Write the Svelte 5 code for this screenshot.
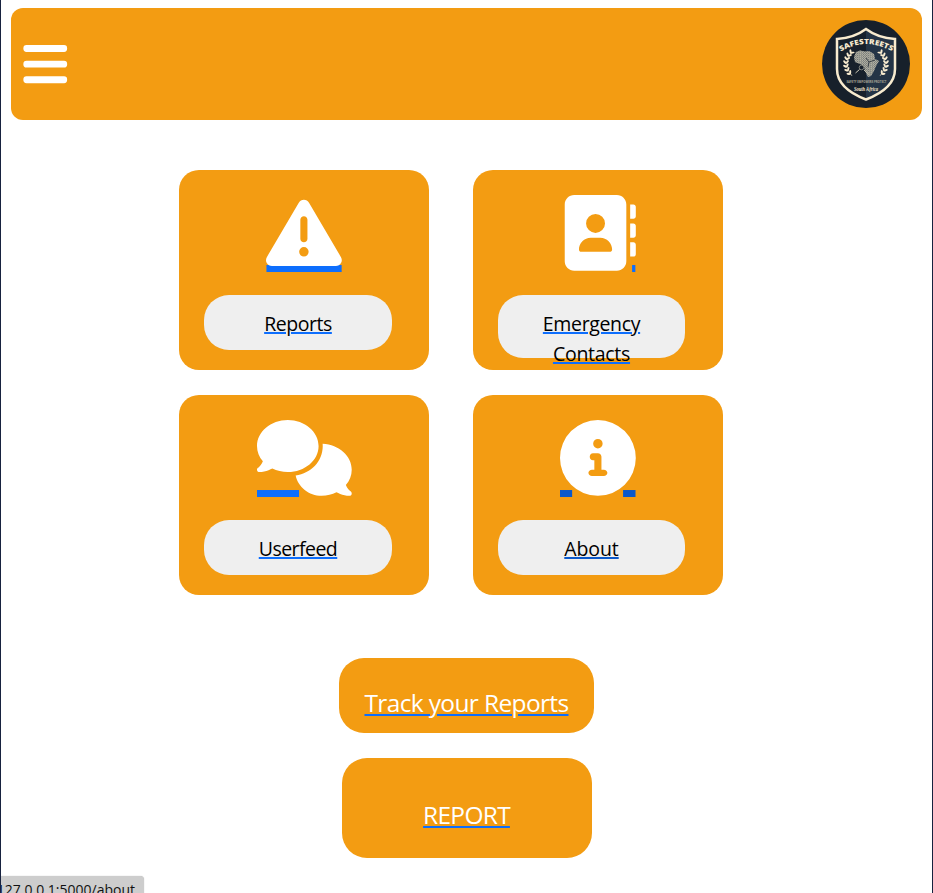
<script>
  const triangle =
    'M256 32c14.200 0 27.300 7.500 34.500 19.800l216 368c7.300 12.400 7.300 27.700.200 40.100S486.300 480 472 480H40c-14.300 0-27.600-7.700-34.700-20.100s-7-27.800.200-40.100l216-368C228.700 39.500 241.800 32 256 32zm0 112c-13.300 0-24 10.700-24 24V296c0 13.300 10.700 24 24 24s24-10.700 24-24V168c0-13.300-10.700-24-24-24zm32 240a32 32 0 1 0-64 0 32 32 0 1 0 64 0z';
  const book =
    'M96 0C60.700 0 32 28.700 32 64V448c0 35.300 28.700 64 64 64H384c35.300 0 64-28.700 64-64V64c0-35.300-28.700-64-64-64H96zM208 288h64c44.200 0 80 35.800 80 80c0 8.800-7.200 16-16 16H144c-8.800 0-16-7.200-16-16c0-44.200 35.800-80 80-80zm-32-96a64 64 0 1 1 128 0 64 64 0 1 1-128 0zM474 64v96h22c8.800 0 16-7.200 16-16V80c0-8.800-7.200-16-16-16zM474 192v96h22c8.800 0 16-7.200 16-16v-64c0-8.800-7.200-16-16-16zM474 320v96h22c8.800 0 16-7.200 16-16v-64c0-8.800-7.200-16-16-16z';
  const comments =
    'M208 352c114.900 0 208-78.800 208-176S322.900 0 208 0S0 78.800 0 176c0 38.600 14.700 74.300 39.600 103.400c-3.500 9.400-8.700 17.700-14.200 24.700c-4.800 6.200-9.700 11-13.300 14.300c-1.800 1.600-3.300 2.900-4.300 3.700c-.5.400-.9.700-1.100.8l-.2.200C1 327.200-1.400 334.400.800 340.900S9.100 352 16 352c21.800 0 43.800-5.600 62.100-12.500c9.200-3.500 17.800-7.400 25.200-11.400C134.100 343.300 169.800 352 208 352zM444 176C444 280 366 360 261 375C278 453 350 512 437 512c36.200 0 70.900-8.700 99.700-23.900c7.500 4 16 7.900 25.200 11.400c18.300 6.900 40.300 12.500 62.100 12.500c6.900 0 13.100-4.500 15.200-11.100c2.100-6.600-.2-13.800-5.800-17.900l-.2-.2c-.2-.2-.6-.4-1.100-.8c-1-.8-2.500-2-4.300-3.700c-3.600-3.300-8.500-8.100-13.300-14.300c-5.500-7-10.700-15.400-14.200-24.700c24.900-29 39.600-64.700 39.600-103.400c0-92.800-84.900-168.900-196.600-175.500c.4 5.100.6 10.300.6 15.500z';
  const info =
    'M256 512A256 256 0 1 0 256 0a256 256 0 1 0 0 512zm-32-352a32 32 0 1 1 64 0 32 32 0 1 1-64 0zm-1 64h33c13.300 0 24 10.700 24 24v88h16c13.300 0 24 10.700 24 21s-10.700 22-24 22h-80c-13.300 0-24-10.700-24-22s10.700-21 24-21h16v-64h-9c-13.300 0-22-10.700-22-24s8.700-24 22-24z';

  const cards = [
    { icon: triangle, width: 512, lines: [['Reports', -0.45]], bars: [[3, 508]] },
    { icon: book, width: 512, narrow: true, tall: true, lines: [['Emergency', -0.35], ['Contacts', -0.28]], bars: [[487, 22]] },
    { icon: comments, width: 640, lines: [['Userfeed', -0.54]], bars: [[0, 284]] },
    { icon: info, width: 512, narrow: true, active: true, lines: [['About', -0.1]], bars: [[0, 82], [426, 84]] }
  ];

  const leaves = [
    [28.800, 33, 35], [26.300, 36, 25], [24.700, 39.500, 12], [24, 43.200, 0], [24.400, 47, -15], [25.800, 50.700, -28], [28.200, 54, -42]
  ];
</script>

<div class="page">
  <header>
    <svg class="bars" viewBox="0 0 448 512" fill="#fff">
      <rect y="62" width="448" height="70" rx="32" />
      <rect y="222" width="448" height="70" rx="32" />
      <rect y="382" width="448" height="70" rx="32" />
    </svg>
    <svg class="logo" viewBox="0 0 88 88">
      <defs>
        <path id="arch" d="M18.600 31.600Q44 16.600 70.400 31.600" />
        <pattern id="grain" width="2.200" height="2" patternUnits="userSpaceOnUse">
          <path d="M0 .5H1.500M1 1.500H2.200" stroke="#cfc9b4" stroke-width=".6" />
        </pattern>
      </defs>
      <circle cx="44" cy="44" r="44" fill="#17202b" />
      <path d="M44 9.500C51 15 61 18.300 72.800 19V49C72.800 64 61 73 44 79.500Z" fill="#243446" />
      <path d="M44 9C36 15 26 18.300 15 19V49C15 64 27 73 44 79.500C61 73 73 64 73 49V19C62 18.300 52 15 44 9Z" fill="none" stroke="#f8ebcf" stroke-width="2.500" />
      <text font-size="7.200" font-weight="800" fill="#f8ebcf" class="brand"><textPath href="#arch" textLength="54" lengthAdjust="spacingAndGlyphs">SAFESTREETS</textPath></text>
      {#each [0, 1] as side}
        <g transform={side ? 'translate(88 0) scale(-1 1)' : undefined}>
          <path d="M30 32Q20 43 30 56" fill="none" stroke="#f8ebcf" stroke-width=".6" />
          {#each leaves as [x, y, turn]}
            <g transform="translate({x} {y}) rotate({turn})" fill="#f8ebcf">
              <ellipse cx="-1.500" cy="0" rx="2.200" ry="1.050" transform="rotate(45)" />
              <ellipse cx="1.800" cy="0" rx="2.100" ry=".95" transform="rotate(-45)" />
            </g>
          {/each}
        </g>
      {/each}
      <path d="M34 32L38 30.500L43 31.500L47 31L52 34L53 39L57 41L54 46L52 51L49 56L46 57L43 51L42 46L38 44L33 42L32 37Z" fill="#6e7475" />
      <path d="M34 32L38 30.500L43 31.500L47 31L52 34L53 39L57 41L54 46L52 51L49 56L46 57L43 51L42 46L38 44L33 42L32 37Z" fill="url(#grain)" />
      <path d="M44 38L47 42L46 47M47 42L53 40M38 44L36 48L33 51" fill="none" stroke="#17202b" stroke-width=".7" />
      <circle cx="39.500" cy="47.500" r="2.300" fill="#17202b" stroke="#a5a598" stroke-width=".7" />
      <path d="M37.500 49.500L33.500 53M42 50L47 54.500" stroke="#c8c4b1" stroke-width="1" />
      <text x="44.500" y="63.300" font-size="2.800" font-weight="700" fill="#aaa797" text-anchor="middle" textLength="40" lengthAdjust="spacingAndGlyphs" class="brand">SAFETY EMPOWERS PROTECT</text>
      <text x="44" y="71" font-size="5.200" font-weight="700" font-style="italic" fill="#f8ebcf" text-anchor="middle" textLength="24" lengthAdjust="spacingAndGlyphs" class="script">South Africa</text>
    </svg>
  </header>

  <main>
    {#each cards as card}
      <a class="card" class:active={card.active}>
        <svg class="icon" viewBox="0 0 {card.width} 512" style:width="{(card.width * 75.800) / 512}px">
          {#each card.bars as [x, w]}
            <rect class="underline" {x} y="473" width={w} height="47.200" />
          {/each}
          <path d={card.icon} fill="#fff" fill-rule="evenodd" />
        </svg>
        <span class="pill" class:tall={card.tall} class:narrow={card.narrow}>
          {#each card.lines as [text, spacing]}
            <span class="line"><span class="label" style:letter-spacing="{spacing}px">{text}</span></span>
          {/each}
        </span>
      </a>
    {/each}
  </main>

  <a class="action track"><span class="label">Track your Reports</span></a>
  <a class="action report"><span class="label">REPORT</span></a>

  <div class="status">127.0.0.1:5000/about</div>
</div>

<style>
  :global(body) {
    margin: 0;
    background: #fff;
  }
  .page {
    position: relative;
    box-sizing: border-box;
    width: 933px;
    height: 893px;
    padding: 8px 10px 0;
    border: solid #17223f;
    border-width: 0 1px;
    overflow: hidden;
    display: flex;
    flex-direction: column;
    background: #fff;
    font-family: 'Open Sans', 'Noto Sans', sans-serif;
  }
  header {
    box-sizing: border-box;
    height: 112px;
    flex: none;
    padding: 0 12px;
    border-radius: 12px;
    background: #f39c12;
    display: flex;
    align-items: center;
    justify-content: space-between;
  }
  .bars {
    width: 44.500px;
    height: 50px;
  }
  .logo {
    width: 88px;
    height: 88px;
  }
  .brand {
    font-family: 'Open Sans', sans-serif;
  }
  .script {
    font-family: 'Liberation Serif', serif;
  }
  main {
    display: grid;
    grid-template-columns: 250px 250px;
    gap: 25px 44px;
    margin: 50px 0 0 168px;
  }
  .card {
    box-sizing: border-box;
    height: 200px;
    padding: 25px;
    border-radius: 20px;
    background: #f39c12;
    display: flex;
    flex-direction: column;
    align-items: center;
    --line: #0d6efd;
  }
  .card.active {
    --line: #0a58ca;
  }
  .icon {
    height: 75.800px;
    flex: none;
    overflow: visible;
  }
  .underline {
    fill: var(--line);
  }
  .pill {
    box-sizing: border-box;
    width: 188px;
    height: 55px;
    flex: none;
    align-self: flex-start;
    margin-top: 24.200px;
    padding-top: 14px;
    border-radius: 25px;
    background: #efefef;
    color: #000;
    font-size: 19.500px;
    line-height: 30px;
    text-align: center;
  }
  .pill.narrow {
    width: 187px;
  }
  .pill.tall {
    height: 63px;
  }
  .line {
    display: block;
  }
  .label {
    text-decoration: underline 2px var(--line);
    text-underline-offset: 1px;
  }
  .action {
    --line: #0d6efd;
    box-sizing: border-box;
    flex: none;
    align-self: center;
    border-radius: 25px;
    background: #f39c12;
    color: #fff;
    font-size: 24.500px;
    line-height: 36px;
    text-align: center;
    white-space: nowrap;
  }
  .action .label {
    text-underline-offset: 2px;
  }
  .track {
    width: 255px;
    height: 75px;
    margin-top: 63px;
    padding-top: 27px;
    letter-spacing: -0.640px;
  }
  .report {
    width: 250px;
    height: 100px;
    margin-top: 25px;
    padding-top: 39px;
    letter-spacing: -0.720px;
  }
  .status {
    position: absolute;
    left: -1px;
    bottom: 0;
    box-sizing: border-box;
    width: 144px;
    height: 17px;
    padding-right: 9px;
    border-radius: 0 4px 0 0;
    background: #cdcdcd;
    box-shadow: 0 0 1px #aaa;
    overflow: hidden;
    display: flex;
    justify-content: flex-end;
    color: #111;
    font-size: 14px;
    line-height: 28px;
    white-space: nowrap;
  }
</style>
